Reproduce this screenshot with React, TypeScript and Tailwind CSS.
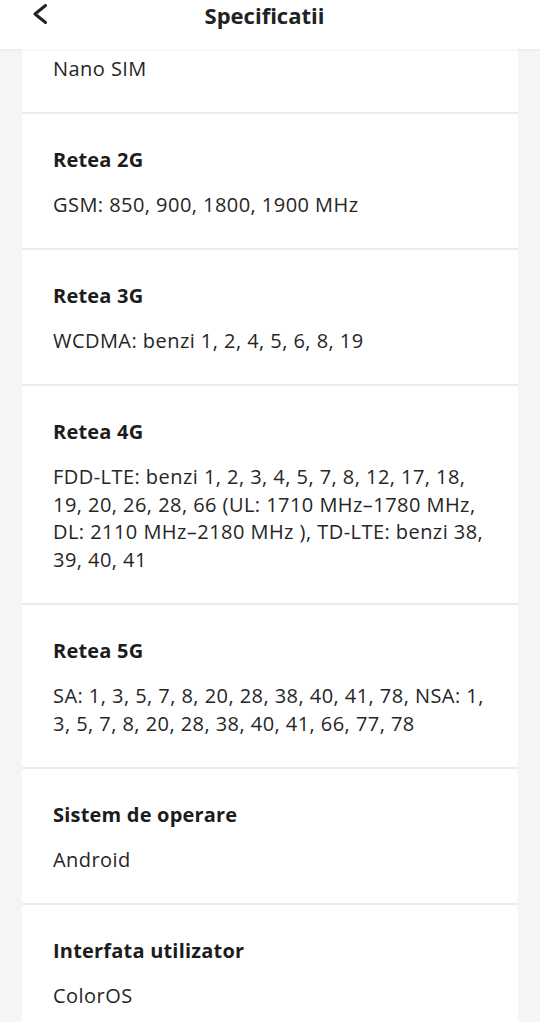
const specs = [
  { title: "Tip SIM", value: "Nano SIM" },
  { title: "Retea 2G", value: "GSM: 850, 900, 1800, 1900 MHz" },
  { title: "Retea 3G", value: "WCDMA: benzi 1, 2, 4, 5, 6, 8, 19" },
  {
    title: "Retea 4G",
    value:
      "FDD-LTE: benzi 1, 2, 3, 4, 5, 7, 8, 12, 17, 18, 19, 20, 26, 28, 66 (UL: 1710 MHz–1780 MHz, DL: 2110 MHz–2180 MHz ), TD-LTE: benzi 38, 39, 40, 41",
  },
  {
    title: "Retea 5G",
    value: "SA: 1, 3, 5, 7, 8, 20, 28, 38, 40, 41, 78, NSA: 1, 3, 5, 7, 8, 20, 28, 38, 40, 41, 66, 77, 78",
  },
  { title: "Sistem de operare", value: "Android" },
  { title: "Interfata utilizator", value: "ColorOS" },
];

export default function App() {
  return (
    <div className="flex h-[1022px] flex-col overflow-hidden bg-[#f5f5f5] font-['Open_Sans',sans-serif] text-[#222]">
      {/* Bara de sus */}
      <header className="relative z-10 flex h-[49px] shrink-0 items-start bg-white shadow-[0_1px_3px_rgba(0,0,0,0.06)]">
        <button className="ml-[32px] mt-[4px] flex h-[19px] w-[16px] items-center justify-center">
          <svg width="16" height="20" viewBox="0 0 16 20" fill="none">
            <path d="M13.5 1.5 3 10l10.5 8.5" stroke="#222" strokeWidth="3" strokeLinecap="round" strokeLinejoin="round" />
          </svg>
        </button>
        <h1 className="flex-1 pr-[59px] text-center text-[22px] font-bold leading-[30px] text-[#222]">
          Specificatii
        </h1>
      </header>

      {/* Lista de specificatii */}
      <div className="flex-1 overflow-hidden px-[22px]">
        <div className="-mt-[71px] flex flex-col">
          {specs.map((s) => (
            <div key={s.title} className="border-b-2 border-[#ececec] bg-white pb-[29.5px] pl-[31px] pr-[28px] pt-[32px]">
              <h2 className="text-[20px] font-bold leading-[28px] tracking-[0.2px] text-[#1c1c1c]">{s.title}</h2>
              <p className="mt-[17px] text-[20px] leading-[27.6px] tracking-[0.45px] text-[#262626]">{s.value}</p>
            </div>
          ))}
        </div>
      </div>
    </div>
  );
}
